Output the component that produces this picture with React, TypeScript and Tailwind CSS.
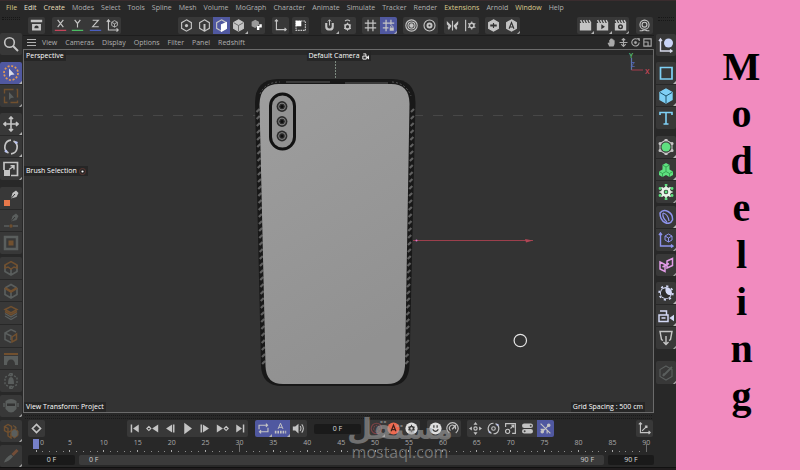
import type { ReactNode } from 'react';

type Tool = { name: string; icon: ReactNode; tone?: string; active?: boolean; more?: boolean };

const ui = "font-['Open_Sans','Noto_Sans',sans-serif]";

function Icon({ children, size = 'size-[13px]' }: { children: ReactNode; size?: string }) {
  return (
    <svg viewBox="0 0 16 16" className={`${size} shrink-0`} fill="none" stroke="currentColor" strokeWidth="1.4" aria-hidden="true">
      {children}
    </svg>
  );
}

const hex = 'M8 1 14 4.5V11.5L8 15 2 11.5V4.5Z';
const gearTeeth = 'M8 1.500V4M8 12v2.500M1.500 8H4M12 8h2.500M3.400 3.400 5.200 5.200M10.800 10.800l1.800 1.800M12.600 3.400 10.800 5.200M5.200 10.800 3.400 12.600';

const clapper = (
  <>
    <path d="M1 5H15V14H1Z" fill="currentColor" stroke="none" />
    <path d="M2 1.500 4 5M5.500 1.500l2 3.500M9 1.500 11 5M12.500 1.500l2 3.500" strokeWidth="1.800" />
  </>
);

const topLeft: Tool[][] = [
  [{ name: 'Asset Browser', icon: <><path d="M1 2.500H15" strokeWidth="3" /><path d="M2.500 6H13.500V14H2.500Z" fill="currentColor" stroke="none" /><path d="M5.500 11.500V9.500Q8 6.500 10.500 9.500V11.500Z" fill="#333" stroke="none" /></> }],
  [
    { name: 'X axis', icon: <><path d="M4.500 1 11.500 10M11.500 1 4.500 10" /><path d="M1 14H15" stroke="#c4455a" strokeWidth="1.700" /></> },
    { name: 'Y axis', icon: <><path d="M4.500 1 8 5.500 11.500 1M8 5.500V10.500" /><path d="M1 14H15" stroke="#4bbd63" strokeWidth="1.700" /></> },
    { name: 'Z axis', icon: <><path d="M4.500 1.500H11.500L4.500 9.500H12" /><path d="M1 14H15" stroke="#4a5ec0" strokeWidth="1.700" /></> },
    { name: 'Coordinate system', icon: <><path d="M3 1V13.500H15M1 3.500 3 1 5 3.500M13 11.500 15 13.500 13 15.500" /><path d="M10.500 2 14 4V8L10.500 10 7 8V4ZM7 4 10.500 6 14 4M10.500 6V10" strokeWidth="1" /></> },
  ],
];

const topMiddle: Tool[] = [
  { name: 'Points', icon: <><path d={hex} /><circle cx="8" cy="8" r="2" fill="currentColor" stroke="none" /></> },
  { name: 'Edges', icon: <><path d={hex} /><path d="M8 6V15" strokeWidth="2.400" /></> },
  { name: 'Polygons', active: true, icon: <><path d={hex} /><path d="M8 7 14 4.500V11.500L8 15Z" fill="#fff" stroke="#fff" /></> },
  { name: 'Model', more: true, icon: <><path d={hex} fill="currentColor" /><path d="M2 4.500 8 8 14 4.500M8 8V15" stroke="#555" strokeWidth="1" /></> },
  { name: 'Object', icon: <><path d="M6.500 1 11 3.500V7L6.500 11 2 9V3.500Z" fill="currentColor" stroke="none" opacity=".7" /><path d="M8.500 8.500h3v-2h3v4h-3v3h-3Z" fill="#fff" stroke="none" /></> },
];

const topAxis: Tool = { name: 'Enable axis', icon: <path d="M3 1V13H15M1 3 3 1 5 3M13 11 15 13 13 15" /> };
const topSolo: Tool = { name: 'Viewport solo', icon: <><path d="M2.500 2.500H14V14H2.500Z" strokeDasharray="2 1" /><path d="M2 2H9V9H2Z" fill="#fff" stroke="none" /></> };

const topCentre: Tool[][] = [
  [
    { name: 'Snap', more: true, icon: <><path d="M4 5V9.500Q4 13 8 13T12 9.500V5" strokeWidth="2.600" /><path d="M8 1V8M6 3 8 1 10 3" strokeWidth="1.200" /></> },
    { name: 'Snap settings', icon: <><path d="M5 2.500Q8 0 11 2.500" /><circle cx="8" cy="9.500" r="3" strokeWidth="2" /><path d="M8 4.500v10M3.600 7l8.800 5M12.400 7l-8.800 5" strokeWidth="1.200" strokeDasharray="2 6 2" /></> },
  ],
  [
    { name: 'Workplane', icon: <path d="M5 1V15M11 1V15M1 5H15M1 11H15" strokeWidth="1.500" /> },
    { name: 'Lock workplane', active: true, more: true, icon: <><path d="M5 1V15M11 1V7M1 5H15M1 11H8" strokeWidth="1.500" /><path d="M9.500 10.500H14.500V14.500H9.500Z" fill="currentColor" stroke="none" /><path d="M10.500 10.500V9Q12 7.500 13.500 9V10.500" strokeWidth="1" /></> },
  ],
  [
    { name: 'Soft selection', icon: <><circle cx="8" cy="8" r="7" /><circle cx="8" cy="8" r="4.300" /><circle cx="8" cy="8" r="2" fill="currentColor" /></> },
    { name: 'Soft selection settings', icon: <><circle cx="8" cy="8" r="6.800" /><circle cx="8" cy="8" r="2.500" strokeWidth="2.400" /></> },
  ],
  [
    { name: 'Symmetry', icon: <><path d="M8 2V14" /><path d="M6.500 8 1 2.500V6.500L3 8.500 2 11 3.500 13.500 6.500 9ZM9.500 8 15 2.500V6.500L13 8.500 14 11 12.500 13.500 9.500 9Z" fill="currentColor" stroke="none" /></> },
    { name: 'Symmetry settings', icon: <><path d="M2 1V15" /><circle cx="9.500" cy="8" r="2.800" strokeWidth="1.800" /><path d="M9.500 3V5M9.500 11v2M5 5.500l1.800 1M12.200 9.500l1.800 1M5 10.500l1.800-1M12.200 6.500l1.800-1" /></> },
  ],
  [
    { name: 'Arnold render', icon: <><path d={hex} fill="currentColor" /><path d="M4 8H12" stroke="#333" strokeWidth="2.500" /><path d="M8 5V11" stroke="#333" /></> },
    { name: 'Arnold IPR', more: true, icon: <><path d={hex} fill="currentColor" /><path d="M5 12 8 4.500 11 12M6 9.800H10" stroke="#333" /></> },
  ],
];

const topRender: Tool[] = [
  { name: 'Render view', more: true, icon: clapper },
  { name: 'Render to picture viewer', more: true, icon: <>{clapper}<path d="M6.500 6.500V12.500L11 9.500Z" fill="#333" stroke="none" /></> },
  { name: 'Render settings', more: true, icon: <>{clapper}<circle cx="8" cy="9.500" r="2.200" stroke="#333" strokeWidth="1.800" /></> },
];
const topMaterial: Tool = { name: 'Materials', icon: <><circle cx="8" cy="7" r="5.600" /><circle cx="8" cy="7" r="3" /><path d="M2 14.500H5Q8 12.500 11 14.500H14" /></> };

const dim = 'text-[#5a5e5d]';
const rust = '#71502f';
const leftRail: { box: string; tools: Tool[] }[] = [
  { box: 'mt-[13px] h-[22px]', tools: [{ name: 'Search', icon: <><circle cx="6.500" cy="6.500" r="4.800" strokeWidth="1.600" /><path d="M10 10 15 15" strokeWidth="2" /></> }] },
  {
    box: 'mt-[7px] h-[45px]',
    tools: [
      { name: 'Live selection', active: true, more: true, icon: <><circle cx="8" cy="8" r="7" stroke="#e29a54" strokeWidth="1.700" strokeDasharray="2 1.660" /><path d="M6 3.500V12L8 10 11.500 9.500Z" fill="#d9dbe8" stroke="none" /></> },
      { name: 'Rectangle selection', tone: dim, more: true, icon: <><path d="M1.500 1.500H14.500V14.500H1.500Z" stroke={rust} strokeDasharray="9 3" /><path d="M6 4V12L8 10 11 9.500Z" fill="currentColor" stroke="none" /></> },
    ],
  },
  {
    box: 'mt-[6px] h-[67px]',
    tools: [
      { name: 'Move', more: true, icon: <path d="M8 1V15M1 8H15M6 3 8 1 10 3M6 13 8 15 10 13M3 6 1 8 3 10M13 6 15 8 13 10" strokeWidth="1.600" /> },
      { name: 'Rotate', more: true, icon: <><path d="M5.500 14A6.800 6.800 0 0 1 8 1.200M10.500 2A6.800 6.800 0 0 1 8 14.800" strokeWidth="1.700" /><path d="M12 3l2.500 1M2 11.500 4 13" stroke="#b9c3f2" strokeWidth="2.200" /></> },
      { name: 'Scale', more: true, icon: <><path d="M1 9V1.500H14.500V14.500H8" strokeWidth="1.700" /><path d="M1 9H7V15H1Z" fill="currentColor" stroke="none" /><path d="M6 8.500 11 5M7.500 4.800H11V8.500" /></> },
    ],
  },
  {
    box: 'mt-[7px] h-[67px]',
    tools: [
      { name: 'Polygon pen', icon: <><path d="M1 10H7V16H1Z" fill="#e8784a" stroke="none" /><path d="M8 8.500 9.500 3 13 0.500 15.500 3 13.500 7Z" fill="currentColor" stroke="none" /><path d="M8 8.500 12 4" stroke="#333" strokeWidth="1" /></> },
      { name: 'Spline pen', tone: dim, icon: <><path d="M8 8.500 9.500 3 13 0.500 15.500 3 13.500 7Z" fill="currentColor" stroke="none" /><path d="M8 8.500 12 4" stroke="#333" strokeWidth="1" /><path d="M1 13H6M10 13H15" /><circle cx="8" cy="13" r="1" stroke={rust} /></> },
      { name: 'Polygon fill', tone: dim, icon: <><path d="M2 2H14V14H2Z" strokeWidth="2.500" /><path d="M5.500 5.500H10.500V10.500H5.500Z" fill={rust} stroke="none" /></> },
    ],
  },
  {
    box: 'mt-[3px] h-[135px]',
    tools: [
      { name: 'Extrude', tone: dim, icon: <><path d="M2 5V11.500L8 15 14 11.500V5M8 8V15" strokeWidth="1.700" /><path d="M2 5 8 1.500 14 5V8L11 7 8 9 5 7 2 8Z" stroke={rust} strokeWidth="1.500" /></> },
      { name: 'Bevel', tone: dim, icon: <><path d="M2 5V11.500L8 15 14 11.500V5M8 8V15M2 5 8 1.500 14 5" strokeWidth="1.700" /><path d="M2 5 8 8.500 14 5" stroke={rust} strokeWidth="2.400" /></> },
      { name: 'Loop cut', tone: dim, icon: <><path d="M2 11 8 14.500 14 11M2 8.500 8 12 14 8.500" strokeWidth="1.400" /><path d="M2 4.500 8 1.500 14 4.500 8 8ZM2 6.500 8 10 14 6.500" stroke={rust} strokeWidth="1.500" /></> },
      { name: 'Solidify', tone: dim, icon: <><path d="M8 14.500 2 11.500V5L8 1.500 13 4M2 5 8 8V12" strokeWidth="1.500" /><path d="M9 9 13.500 6V11.500L9 14Z" stroke={rust} strokeWidth="1.500" /></> },
      { name: 'Bridge', tone: dim, icon: <><path d="M1 5H15V14H12Q12 8.500 8 8.500T4 14H1Z" fill="currentColor" stroke="none" /><path d="M1 3H15" stroke={rust} strokeWidth="2" /></> },
      { name: 'Lattice', tone: dim, icon: <><path d={hex} strokeDasharray="2 1.500" /><path d="M8 4Q11 4 11 11H5Q5 4 8 4Z" fill="currentColor" stroke="none" /><circle cx="8" cy="1.500" r="1.300" /><circle cx="8" cy="14.500" r="1.300" /></> },
    ],
  },
  { box: 'mt-[3px] h-[22px]', tools: [{ name: 'Mask', tone: dim, more: true, icon: <><path d="M2.500 3Q8-1 13.500 3V11Q8 18 2.500 11Z" fill="currentColor" stroke="none" /><path d="M4 5.500H12V8H4Z" fill="#333" stroke="none" /><path d="M1 5V9M15 5V9" /></> }] },
  { box: 'mt-[3px] h-[22px]', tools: [{ name: 'Boolean', tone: dim, more: true, icon: <><path d="M1.500 3.500 5 1.500 8.500 3.500V7.500L5 9.500 1.500 7.500ZM1.500 3.500 5 5.500V9.500M5 10V13L8 15V10.500" stroke={rust} /><path d="M8 8 11.500 6 15 8V12.500L11.500 15 8 12.500ZM10 2.500 13 4V6" fill="currentColor" stroke={rust} strokeWidth="1" /></> }] },
  { box: 'mt-[3px] h-[22px]', tools: [{ name: 'Knife', tone: dim, more: true, icon: <><path d="M1 14.500Q2 10 8 6.500L10 8.500Q6 13.500 1 14.500Z" fill="currentColor" stroke="none" /><path d="M9.500 7 14.500 2" stroke="#734d38" strokeWidth="3" /></> }] },
];

const sky = 'text-[#7fd0f5]';
const green = '#5fe080';
const rightRail: { box: string; tools: Tool[] }[] = [
  { box: 'mt-[13px] h-[22px]', tools: [{ name: 'Null object', tone: 'text-[#d6d9ea]', icon: <><path d="M2.500 2V14H14M1 4 2.500 2 4 4M12 12.500 14 14 12 15.500" /><circle cx="10.500" cy="6" r="4.500" fill="#c9d4f7" stroke="none" /></> }] },
  {
    box: 'mt-[6px] h-[67px]',
    tools: [
      { name: 'Spline rectangle', tone: sky, more: true, icon: <path d="M2.500 2.500H14V14H2.500Z" strokeWidth="1.700" /> },
      { name: 'Cube', tone: sky, more: true, icon: <><path d={hex} fill="currentColor" /><path d="M2 4.500 8 8 14 4.500M8 8V15" stroke="#1e536b" strokeWidth="1" /></> },
      { name: 'Text', tone: sky, icon: <path d="M2 5V2.500H14V5M8 2.500V14M5.500 14H10.500" strokeWidth="1.600" /> },
    ],
  },
  {
    box: 'mt-[7px] h-[67px]',
    tools: [
      { name: 'Subdivision surface', more: true, icon: <><path d={hex} strokeWidth="1.100" /><circle cx="8" cy="8" r="4.500" fill={green} stroke="none" /><path d="M8 1h.1M14 4.500h.1M14 11.500h.1M8 15h.1M2 11.500h.1M2 4.500h.1" strokeWidth="3" strokeLinecap="round" /></> },
      { name: 'Cloner', more: true, icon: <><path d="M8 1 11.500 3V7.500L15 9.500V13L11.500 15 8 13 4.500 15 1 13V9.500L4.500 7.500V3Z" fill={green} stroke="none" /><path d="M4.500 3 8 5 11.500 3M8 5V9M1 9.500 4.500 11.500 8 9.500 11.500 11.500 15 9.500M4.500 11.500V15M11.500 11.500V15" stroke="#2c9448" strokeWidth=".8" /></> },
      { name: 'Volume builder', more: true, icon: <><circle cx="8" cy="8" r="3.600" stroke="#e6f2e8" strokeWidth="2.600" /><path d={gearTeeth} stroke="#e6f2e8" strokeWidth="1.700" /><path d="M8 1h.1M14 4.500h.1M14 11.500h.1M8 15h.1M2 11.500h.1M2 4.500h.1M8 8h.1" stroke={green} strokeWidth="2.800" strokeLinecap="round" /></> },
    ],
  },
  {
    box: 'mt-[3px] h-[45px]',
    tools: [
      { name: 'Bend', tone: 'text-[#8d92ea]', more: true, icon: <><path d="M2 4Q5 0 10 2.500T14.500 11Q12 16 7 13.500T2 4Z" strokeWidth="1.500" /><path d="M5 4Q10 5 11 12M5 4Q4 9 9 13" strokeWidth="1.200" /></> },
      { name: 'Tracker tag', tone: 'text-[#8d92ea]', more: true, icon: <><path d="M2.500 1V14H15M1 3 2.500 1 4 3M13 12.500 15 14 13 15.500" /><path d="M10.500 2 14 4V8L10.500 10 7 8V4ZM7 4 10.500 6 14 4M10.500 6V10" strokeWidth="1" /></> },
    ],
  },
  { box: 'mt-[3px] h-[22px]', tools: [{ name: 'Symmetry object', tone: 'text-[#e09be6]', more: true, icon: <path d="M2 5 7 7.500V14.500L2 12ZM9 4 14.500 1.500V8.500L9 11ZM4.500 10 11 6.500" strokeWidth="1.500" /> }] },
  {
    box: 'mt-[6px] h-[67px]',
    tools: [
      { name: 'Light', tone: 'text-[#d2d8f5]', more: true, icon: <><circle cx="8" cy="8" r="6.900" strokeWidth="1.600" strokeDasharray="2.200 3.220" /><circle cx="8" cy="8" r="6" fill="currentColor" stroke="none" /><path d="M7.500 3.200A5 5 0 1 0 12.500 10.200Q6.500 10 7.500 3.200Z" fill="#2c2c2c" stroke="none" /></> },
      { name: 'Camera', tone: 'text-[#d2d8f5]', more: true, icon: <><path d="M1 7H10V13.500H1ZM2 3H8.500V7M3.500 10H7.500" strokeWidth="1.500" /><path d="M12.500 10 16 7.500V12.500Z" fill="currentColor" /></> },
      { name: 'Stage', more: true, icon: <path d="M5 10.500 3.500 9.500 2 1.500H14L12.500 9.500 11 10.500M8 6V14.500M5.500 12 8 14.500 10.500 12" strokeWidth="1.400" /> },
    ],
  },
  { box: 'mt-[12px] h-[23px]', tools: [{ name: 'Edit material', tone: dim, more: true, icon: <><path d={hex} strokeWidth="1.100" /><path d="M5 11 14 2M5 11 6 8.500" strokeWidth="1.800" /></> }] },
];

const arrowBack = 'M12 3V13L5 8Z';
const arrowFwd = 'M4 3V13L11 8Z';
const transport: Tool[] = [
  { name: 'Go to start', icon: <><path d="M3 3V13" strokeWidth="1.800" /><path d={arrowBack} fill="currentColor" stroke="none" /></> },
  { name: 'Previous key', icon: <><path d="M3.500 5.500 6 8 3.500 10.500 1 8Z" /><path d="M15 3V13L7.500 8Z" fill="currentColor" stroke="none" /></> },
  { name: 'Previous frame', icon: <><path d="M10 3V13L2.500 8Z" fill="currentColor" stroke="none" /><path d="M12 3V13" strokeWidth="1.800" /></> },
  { name: 'Play', icon: <path d="M4 1V15L13.500 8Z" fill="currentColor" stroke="none" /> },
  { name: 'Next frame', icon: <><path d="M4 3V13" strokeWidth="1.800" /><path d="M6 3V13L13.500 8Z" fill="currentColor" stroke="none" /></> },
  { name: 'Next key', icon: <><path d="M1 3V13L8.500 8Z" fill="currentColor" stroke="none" /><path d="M12.500 5.500 15 8 12.500 10.500 10 8Z" /></> },
  { name: 'Go to end', icon: <><path d={arrowFwd} fill="currentColor" stroke="none" /><path d="M13 3V13" strokeWidth="1.800" /></> },
];
const playback: Tool[] = [
  { name: 'Loop', active: true, more: true, icon: <path d="M2.500 9V4H13M11 2 13 4 11 6M13.500 7V12H3M5 10 3 12 5 14" /> },
  { name: 'All frames', active: true, more: true, icon: <><path d="M5 8.500 8 1.500 11 8.500M6 6.500H10" strokeWidth="1.200" /><path d="M1 12.500H15" strokeWidth="3.500" strokeDasharray="2 1.200" /></> },
  { name: 'Sound', icon: <><path d="M1 5.500H4L8 2V14L4 10.500H1Z" fill="currentColor" stroke="none" /><path d="M10 5Q12 8 10 11M12 3Q16 8 12 13" strokeWidth="1.300" /></> },
];
const record: Tool[] = [
  { name: 'Record', tone: 'text-[#7b4145]', more: true, icon: <><circle cx="8" cy="8" r="6.500" /><circle cx="8" cy="8" r="3.500" strokeDasharray="2 1" /></> },
  { name: 'Autokey', tone: 'text-[#ee6a50]', icon: <><circle cx="8" cy="8" r="7.500" fill="currentColor" stroke="none" /><path d="M5 11.500 8 4 11 11.500M6 9.500H10" stroke="#40211c" strokeWidth="1.500" /></> },
  { name: 'Keyframe options', tone: 'text-[#dedede]', icon: <><circle cx="8" cy="8" r="7.500" fill="currentColor" stroke="none" /><circle cx="8" cy="8" r="2.500" stroke="#383838" strokeWidth="2" /><path d="M8 3.500V5M8 11v1.500M4 6l1.500.8M10.500 9.200 12 10M12 6l-1.500.8M5.500 9.200 4 10" stroke="#383838" strokeWidth="1.300" /></> },
];
const motion: Tool[] = [
  { name: 'Motion system', tone: 'text-[#dedede]', icon: <><circle cx="8" cy="8" r="7.500" fill="currentColor" stroke="none" /><path d="M6 4V7M10 4V7M4.500 9Q8 14 11.500 9" stroke="#383838" strokeWidth="1.500" /></> },
  { name: 'Motion capture', icon: <><path d="M4 13.500A7 7 0 1 1 12 13.500M5.500 10.500A3.800 3.800 0 1 1 11.500 9" /><path d="M7.500 9 12 4" strokeWidth="1.800" /></> },
];
const tracks: Tool[] = [
  { name: 'Position track', icon: <><path d="M8 0 10.500 3.500H5.500ZM8 16 5.500 12.500H10.500ZM0 8 3.500 5.500V10.500ZM16 8 12.500 10.500V5.500Z" fill="currentColor" stroke="none" /><circle cx="8" cy="8" r="2" /></> },
  { name: 'Rotation track', icon: <><path d="M5.500 14A6.500 6.500 0 0 1 8 1.500M10.500 2A6.500 6.500 0 0 1 8 14.500" /><circle cx="8" cy="8" r="2.200" /><path d="M12 3l2 1M2.500 12 4 13" stroke="#b9c3f2" strokeWidth="2" /></> },
  { name: 'Scale track', icon: <><path d="M2 6V2H14V14H10M8 8 12 4M9 4H12V7" /><circle cx="4.500" cy="11.500" r="2.600" /></> },
  { name: 'Parameter track', icon: <><path d="M4 4.500H12M4 11.500H12" strokeWidth="5.500" strokeLinecap="round" /><circle cx="12" cy="4.500" r="1.200" fill="#444" stroke="none" /><circle cx="4.500" cy="11.500" r="1.200" fill="#444" stroke="none" /></> },
  { name: 'Point level animation', active: true, icon: <><path d="M2 2 14 14M3 13 12.500 3.500M10 10V14M2 9H6" strokeWidth="1.400" /><circle cx="12" cy="4" r="1.500" fill="currentColor" /><circle cx="4" cy="12" r="1.500" fill="currentColor" /></> },
];

function ToolButton({ tool, large }: { tool: Tool; large?: boolean }) {
  return (
    <button
      type="button"
      aria-label={tool.name}
      className={`relative flex min-h-0 min-w-0 flex-1 items-center justify-center overflow-hidden ${tool.active ? 'bg-[#5058a0]' : 'bg-[#383838]'} ${tool.tone ?? 'text-[#c4c4c4]'}`}
    >
      <Icon size={large ? 'size-[16px]' : 'size-[13px]'}>{tool.icon}</Icon>
      {tool.more && <span className="absolute right-0 bottom-0 border-b-[3px] border-l-[3px] border-b-[#b4b4b4] border-l-transparent" />}
    </button>
  );
}

function Group({ tools, box }: { tools: Tool[]; box: string }) {
  return (
    <div className={`flex h-[17px] shrink-0 overflow-hidden rounded-[2px] ${box}`}>
      {tools.map((t) => <ToolButton key={t.name} tool={t} />)}
    </div>
  );
}

function Rail({ groups, label, box }: { groups: typeof leftRail; label: string; box: string }) {
  return (
    <nav aria-label={label} className={`flex shrink-0 flex-col pt-[2px] ${box}`}>
      <div className="mx-[2px] h-[4px] border-y border-dotted border-[#171717]" />
      {groups.map((g) => (
        <div key={g.tools[0].name} className={`flex shrink-0 flex-col gap-px overflow-hidden rounded-[2px] ${g.box}`}>
          {g.tools.map((t) => <ToolButton key={t.name} tool={t} large />)}
        </div>
      ))}
    </nav>
  );
}

const menus = ['File', 'Edit', 'Create', 'Modes', 'Select', 'Tools', 'Spline', 'Mesh', 'Volume', 'MoGraph', 'Character', 'Animate', 'Simulate', 'Tracker', 'Render', 'Extensions', 'Arnold', 'Window', 'Help'];
const menuTone: Record<string, string> = { File: 'text-[#d9c98a]', Edit: 'text-[#e6e0d0]', Create: 'text-[#e6dcb8]', Extensions: 'text-[#dccb8e]', Window: 'text-[#dccb8e]' };
const viewMenus = ['View', 'Cameras', 'Display', 'Options', 'Filter', 'Panel', 'Redshift'];

function Lens({ y }: { y: number }) {
  return (
    <g>
      <circle cx="282" cy={y} r="5.400" fill="#2c2c2c" />
      <circle cx="282" cy={y} r="3.400" fill="none" stroke="#858585" strokeWidth="1" />
      <circle cx="282" cy={y} r="1.500" fill="#0e0e0e" />
    </g>
  );
}

const ridges = Array.from({ length: 37 }, (_, i) => {
  const y = 108 + i * 7;
  const drift = (y - 108) * 0.0225;
  return `M${256.5 + drift} ${y + 4}l3-3M${411 - drift} ${y + 4}l3-3`;
}).join('');

function Scene() {
  return (
    <svg viewBox="24 50 629 362" className="absolute inset-0 size-full" role="img" aria-label="Phone model in the perspective view">
      <defs>
        <linearGradient id="back" x1="0" y1="0" x2="0.3" y2="1">
          <stop offset="0" stopColor="#9e9e9e" />
          <stop offset="1" stopColor="#919191" />
        </linearGradient>
      </defs>
      <path d="M33 115.500H653" stroke="#474747" strokeDasharray="10 10" />
      <path d="M335.500 61V79" stroke="#7d8a80" strokeDasharray="2 1" />
      <path d="M255 103Q255 79 278 79H392Q415.500 79 415.500 103L409.500 365Q409 386 389 386H282Q261.500 386 261 365Z" fill="#181818" />
      <path d={ridges} stroke="#606060" strokeWidth="2.200" fill="none" />
      <path d="M260 94Q265 82 280 82" stroke="#555" strokeDasharray="2 2" fill="none" />
      <path d="M392 82Q406 83 411 96" stroke="#555" strokeDasharray="2 2" fill="none" />
      <path d="M286 82H330M345 83H388" stroke="#5d5d5d" />
      <path d="M259.500 104Q260 84 279 84H391Q409.500 84 409.500 104L405 366Q404 384 387 384H283Q266 384 265.500 366Z" fill="url(#back)" />
      <rect x="270.500" y="94" width="24" height="55" rx="12" fill="#929292" stroke="#121212" strokeWidth="3" />
      <Lens y={106.5} />
      <Lens y={121.5} />
      <Lens y={136} />
      <path d="M413 240.500H533" stroke="#9c3f4c" />
      <path d="M525 239 533 240.500 526 242.500Z" fill="#b04655" />
      <circle cx="416.500" cy="240.500" r="1" fill="#d77bd0" />
      <circle cx="520.300" cy="340.500" r="6.200" fill="none" stroke="#e4e4e4" strokeWidth="1.200" />
      <path d="M631.500 58V70" stroke="#5d78a8" strokeWidth="1.200" />
      <path d="M631.500 70H643" stroke="#a53d4c" />
      <g className="font-['Open_Sans',sans-serif] text-[7px] font-semibold">
        <text x="629" y="58" fill="#57c878">Y</text>
        <text x="631" y="67" fill="#5064b8">Z</text>
        <text x="645" y="74" fill="#d2475a">X</text>
      </g>
    </svg>
  );
}

const tag = 'absolute bg-[#262626] px-[2px] text-[7px] leading-[10px] text-white';
const field = 'h-[10px] min-w-0 rounded-[2px] bg-[#1a1a1a] text-center text-[7px] leading-[10px] text-[#dadada] outline-none';

function Ruler() {
  const frames = Array.from({ length: 91 }, (_, i) => i);
  return (
    <div className="mt-px h-[16px] pr-[7px] pl-[13px]">
      <div className="flex justify-between">
        {frames.map((f) => (
          <div key={f} className="relative flex h-[16px] w-0 justify-center">
            {f === 0 && <span className="absolute top-[1px] h-[10px] w-[6px] bg-[#7680c8]" />}
            {f % 5 === 0 && (
              <span className={`absolute top-0 text-[7px] leading-[10px] text-[#a8a8a8] ${f === 0 ? 'left-[4px]' : ''}`}>{f}</span>
            )}
            <span className={`absolute bottom-[2px] w-px ${f === 30 || f === 90 ? 'h-[8px] bg-[#6e6e6e]' : f % 5 === 0 ? 'h-[2px] bg-[#a8a8a8]' : 'h-px bg-[#8a8a8a]'}`} />
          </div>
        ))}
      </div>
    </div>
  );
}

function Timeline() {
  return (
    <section aria-label="Timeline" className="relative shrink-0 pb-[2px]">
      <div className="mx-[2px] mt-[2px] mb-[1px] h-[4px] border-y border-dotted border-[#191919]" />
      <div className="flex h-[17px] items-center pr-px pl-[5px]">
        <Group box="w-[17px]" tools={[{ name: 'Add keyframe', icon: <path d="M8 3 13 8 8 13 3 8Z" strokeWidth="2" /> }]} />
        <Group box="ml-[82px] w-[121px]" tools={transport} />
        <Group box="ml-[7px] w-[52px]" tools={playback} />
        <input aria-label="Current frame" defaultValue="0 F" className={`${field} ml-[7px] w-[47px]`} />
        <Group box="ml-[7px] w-[52px]" tools={record} />
        <Group box="ml-[7px] w-[34px]" tools={motion} />
        <Group box="ml-[6px] w-[87px]" tools={tracks} />
        <Group box="ml-auto w-[17px]" tools={[{ name: 'Timeline graph', icon: <path d="M3 1V13H15M1 3 3 1 5 3M13 11 15 13 13 15M5 11 11 5M8.500 5H11V7.500" /> }]} />
      </div>
      <Ruler />
      <div className="mt-px flex items-center gap-[4px] pl-[5px]">
        <input aria-label="Start frame" defaultValue="0 F" className={`${field} w-[47px]`} />
        <div className="flex h-[10px] flex-1 justify-between rounded-[2px] bg-[#3b3b3b] px-[10px] text-[7px] leading-[10px] text-[#cfcfcf]">
          <span>0 F</span>
          <span>90 F</span>
        </div>
        <input aria-label="End frame" defaultValue="90 F" className={`${field} w-[46px]`} />
      </div>
      <div className="pointer-events-none absolute top-[2px] left-[328px] flex w-[98px] flex-col items-center text-[#a0a0a0] opacity-60">
        <span lang="ar" dir="rtl" className="font-['DejaVu_Sans',sans-serif] text-[29px] leading-[29px] font-bold whitespace-nowrap">مستقل</span>
        <span className="text-[16px] leading-[16px]">mostaql.com</span>
      </div>
    </section>
  );
}

export default function App() {
  return (
    <div className={`flex h-screen min-h-[470px] bg-[#282828] ${ui}`}>
      <main className="flex min-w-0 flex-1 flex-col overflow-hidden">
        <nav aria-label="Main menu" className="flex h-[15px] shrink-0 items-center gap-[7px] border-t border-[#3a2c2e] pl-[6px] text-[7px] text-[#b0b0b0]">
          {menus.map((m) => <button key={m} type="button" className={menuTone[m] ?? ''}>{m}</button>)}
        </nav>
        <div className="flex min-h-0 flex-1">
          <Rail groups={leftRail} label="Modeling tools" box="w-[22px]" />
          <div className="ml-px flex min-w-0 flex-1 flex-col">
            <div role="toolbar" aria-label="Main toolbar" className="flex h-[20px] shrink-0 items-center pl-[5px]">
              <Group box="w-[17px]" tools={topLeft[0]} />
              <Group box="ml-[7px] w-[69px]" tools={topLeft[1]} />
              <Group box="ml-[57px] w-[87px]" tools={topMiddle} />
              <Group box="ml-[7px] w-[17px]" tools={[topAxis]} />
              <Group box="ml-[3px] w-[17px]" tools={[topSolo]} />
              <div className="ml-[12px] flex gap-[6px]">
                {topCentre.map((g) => <Group key={g[0].name} box="w-[35px]" tools={g} />)}
              </div>
              <Group box="ml-auto w-[52px]" tools={topRender} />
              <Group box="mr-px ml-[7px] w-[17px]" tools={[topMaterial]} />
            </div>
            <div className="flex h-[14px] shrink-0 items-center border-t border-[#1d1d1d] pr-[2px] pl-[4px] text-[7px] text-[#b0b0b0]">
              <button type="button" aria-label="View panel menu" className="mr-[6px] flex w-[9px] flex-col gap-[2px]">
                <span className="h-px bg-[#b0b0b0]" />
                <span className="h-px bg-[#b0b0b0]" />
                <span className="h-px bg-[#b0b0b0]" />
              </button>
              <nav aria-label="View menu" className="flex gap-[8px] leading-[12px]">
                {viewMenus.map((m) => <button key={m} type="button">{m}</button>)}
              </nav>
              <div className="ml-auto flex gap-[3px] text-[#a9a9a9]">
                <button type="button" aria-label="Pan"><Icon size="size-[9px]"><path d="M4 15 1 9 2.500 8 4 9.500V3.500L5.500 3V1.500H7.500V1H9.500V2H11.500V4H13.500V10Q13 13 11.500 15Z" fill="currentColor" stroke="none" /></Icon></button>
                <button type="button" aria-label="Dolly"><Icon size="size-[9px]"><path d="M8 2V14M5 4 8 1 11 4M1 8H15M4 11 8 15 12 11" strokeWidth="2" /></Icon></button>
                <button type="button" aria-label="Orbit"><Icon size="size-[9px]"><path d="M11 2A6.500 6.500 0 1 0 14.500 8" strokeWidth="2" /><circle cx="8" cy="8" r="2" fill="currentColor" /><path d="M11 1h4v4Z" fill="currentColor" /></Icon></button>
                <button type="button" aria-label="Maximize view"><Icon size="size-[9px]"><path d="M1.500 1.500H14.500V14.500H1.500ZM1.500 7H9V14.500" strokeWidth="2" /></Icon></button>
              </div>
            </div>
            <section aria-label="Viewport" className="relative min-h-0 flex-1 border border-[#6b6b6b] bg-[#333333]">
              <div className="absolute inset-x-0 top-0 h-[5px] bg-[#282828]" />
              <Scene />
              <span className={`${tag} top-px left-0`}>Perspective</span>
              <span className={`${tag} top-px left-1/2 flex -translate-x-1/2 items-center gap-[2px] whitespace-nowrap`}>
                Default Camera
                <Icon size="size-[7px]"><path d="M2 7H10V14H2ZM3 2H9V7" strokeWidth="2" /><path d="M11 10 16 6V14Z" fill="currentColor" /></Icon>
              </span>
              <span className={`${tag} top-[116px] left-0 flex items-center gap-[2px]`}>
                Brush Selection
                <Icon size="size-[7px]"><circle cx="8" cy="8" r="7" stroke="#7a4038" /><circle cx="8" cy="8" r="2.500" fill="currentColor" stroke="none" /></Icon>
              </span>
              <span className={`${tag} bottom-0 left-0`}>View Transform: Project</span>
              <span className={`${tag} right-[8px] bottom-0`}>Grid Spacing : 500 cm</span>
            </section>
            <Timeline />
          </div>
          <Rail groups={rightRail} label="Create objects" box="ml-[2px] w-[20px]" />
        </div>
        <footer className="h-[3px] shrink-0 border-t border-[#111] bg-[#201d1e]" />
      </main>
      <aside className="w-[124px] shrink-0 bg-[#f28bbf] pt-[43px] pl-[7px]">
        <h1 aria-label="Modeling" className="flex flex-col items-center font-['Liberation_Serif',serif] text-[40px] leading-[47px] font-bold text-black">
          {Array.from('Modeling').map((letter, i) => <span key={i}>{letter}</span>)}
        </h1>
      </aside>
    </div>
  );
}
